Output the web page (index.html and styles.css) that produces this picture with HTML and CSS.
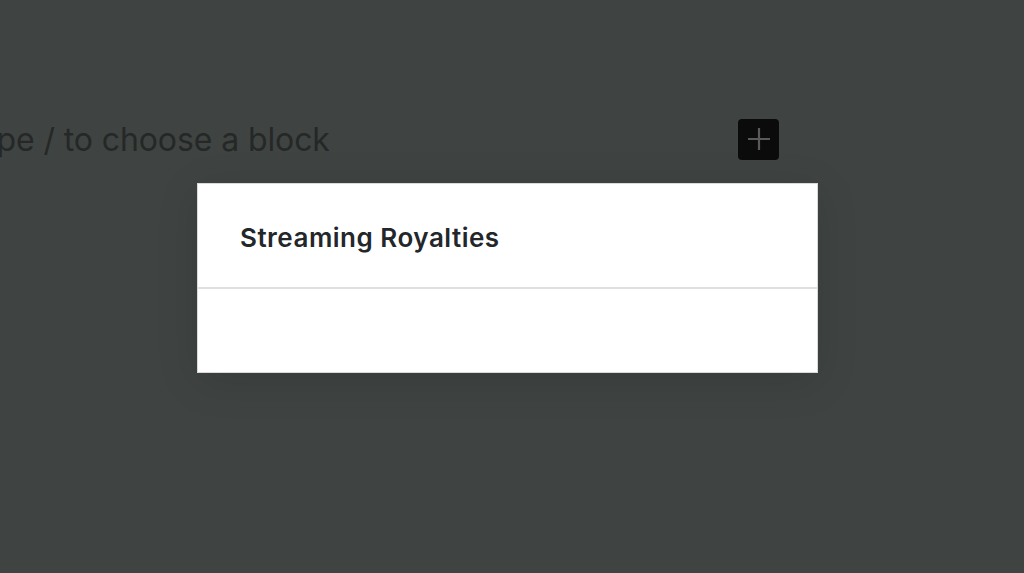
FILE: index.html
```html
<!DOCTYPE html>
<html>
<head>
<meta charset="utf-8">
<link rel="stylesheet" href="styles.css">
</head>
<body>
<div class="editor">
  <div class="block-row">
    <p class="placeholder">Type / to choose a block</p>
    <button class="inserter" aria-label="Add block">
      <svg width="24" height="24" viewBox="0 0 24 24"><path d="M12 1v22M1 12h22" stroke="#5a5a5a" stroke-width="2.2" fill="none"/></svg>
    </button>
  </div>
  <div class="modal">
    <div class="modal-header"><h1 class="modal-title">Streaming Royalties</h1></div>
    <div class="modal-body"></div>
  </div>
</div>
</body>
</html>
```

FILE: styles.css
```css
html, body { margin: 0; padding: 0; }
body {
  background: #3f4442;
  width: 1024px;
  height: 573px;
  overflow: hidden;
  font-family: Inter, "Noto Sans", sans-serif;
}
.editor { padding-top: 118px; }
.block-row {
  display: flex;
  align-items: center;
  height: 42px;
}
.placeholder {
  margin: 0 0 0 -40px;
  font-size: 32px;
  color: #252827;
  width: 778px;
  flex: none;
  letter-spacing: -0.1px;
}
.inserter {
  width: 41px;
  height: 41px;
  background: #0b0b0b;
  border: none;
  border-radius: 4px;
  padding: 0;
  display: flex;
  align-items: center;
  justify-content: center;
}
.modal {
  margin: 23px 0 0 197px;
  width: 621px;
  background: #fff;
  border: 1px solid #d9d9d9;
  box-sizing: border-box;
  box-shadow: 0 8px 40px rgba(0,0,0,0.12);
}
.modal-header {
  height: 105px;
  border-bottom: 2px solid #e0e0e0;
  display: flex;
  align-items: center;
  padding-left: 42px;
  padding-top: 3px;
  box-sizing: border-box;
}
.modal-title {
  margin: 0;
  font-size: 26px;
  font-weight: 600;
  color: #23272a;
  letter-spacing: 0.5px;
}
.modal-body { height: 83px; }
```
